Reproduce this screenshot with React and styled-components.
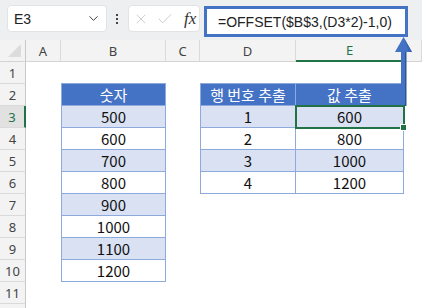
import styled, { createGlobalStyle } from "styled-components";
import { ChevronDown, X, Check } from "lucide-react";

const GlobalStyle = createGlobalStyle`
  body {
    margin: 0;
    background: #fff;
    font-family: "Noto Sans", "Noto Sans CJK KR", sans-serif;
  }
`;

const COLS = "26px 35px 105px 34px 96px 108px 1fr";
const LETTERS = ["A", "B", "C", "D", "E", ""];

const numbers = [500, 600, 700, 800, 900, 1000, 1100, 1200];
const lookup = [
  [1, 600],
  [2, 800],
  [3, 1000],
  [4, 1200],
];

const Page = styled.div`
  position: relative;
  width: 422px;
  height: 308px;
  overflow: hidden;
`;

const Toolbar = styled.div`
  height: 40px;
  box-sizing: border-box;
  background: #eeeff1;
  display: flex;
  align-items: flex-start;
  padding: 5px 0 0 7px;
`;

const NameBox = styled.div`
  width: 100px;
  height: 27px;
  box-sizing: border-box;
  background: #fff;
  border: 1px solid #e2e3e5;
  border-radius: 4px;
  display: flex;
  align-items: center;
  justify-content: space-between;
  padding: 0 5px 0 6px;
  font-family: "Liberation Sans", sans-serif;
  font-size: 14px;
  color: #222;
`;

const Dots = styled.div`
  margin: 9px 0 0 9px;
  display: flex;
  flex-direction: column;
  gap: 2px;
  span {
    width: 2px;
    height: 2px;
    background: #444;
  }
`;

const FxBox = styled.div`
  margin-left: 10px;
  width: 72px;
  height: 27px;
  box-sizing: border-box;
  background: #fff;
  border: 1px solid #e2e3e5;
  border-radius: 4px;
  display: flex;
  align-items: center;
  gap: 7px;
  padding-left: 4px;
  color: #c4c4c4;
`;

const Fx = styled.span`
  margin-left: 3px;
  font-family: "Liberation Serif", serif;
  font-style: italic;
  font-size: 17px;
  color: #333;
`;

const FormulaBox = styled.div`
  margin: 1px 0 0 4px;
  width: 204px;
  height: 31px;
  box-sizing: border-box;
  background: #fff;
  border: 3px solid #4472c4;
  display: flex;
  align-items: center;
  padding-left: 11px;
  font-family: "Liberation Sans", sans-serif;
  font-size: 14px;
  color: #222;
`;

const Grid = styled.div`
  display: flex;
  flex-direction: column;
`;

const Row = styled.div`
  display: grid;
  grid-template-columns: ${COLS};
  height: 22px;
`;

const Corner = styled.div`
  position: relative;
  background: #f3f3f3;
  border-right: 1px solid #c8c8c8;
  border-bottom: 1px solid #d4d4d4;
  &::after {
    content: "";
    position: absolute;
    right: 4px;
    bottom: 4px;
    border-style: solid;
    border-width: 0 0 13px 13px;
    border-color: transparent transparent #dcdcdc transparent;
  }
`;

const ColHead = styled.div`
  background: #f3f3f3;
  border-right: 1px solid #dadada;
  border-bottom: ${(p) => (p.$active ? "2px solid #217346" : "1px solid #d4d4d4")};
  display: flex;
  align-items: center;
  justify-content: center;
  font-size: 13px;
  color: ${(p) => (p.$active ? "#217346" : "#444")};
`;

const RowHead = styled.div`
  background: ${(p) => (p.$active ? "#e1e1e1" : "#f3f3f3")};
  border-bottom: 1px solid #dadada;
  border-right: ${(p) => (p.$active ? "2px solid #217346" : "1px solid #c8c8c8")};
  display: flex;
  align-items: center;
  justify-content: center;
  font-size: 13px;
  color: ${(p) => (p.$active ? "#217346" : "#444")};
`;

const Cell = styled.div`
  background: #fff;
`;

const TCell = styled.div`
  position: relative;
  box-sizing: border-box;
  background: ${(p) =>
    p.$kind === "head" ? "#4472c4" : p.$kind === "alt" ? "#d9e1f2" : "#fff"};
  color: ${(p) => (p.$kind === "head" ? "#fff" : "#111")};
  border-right: 1px solid #8ea9db;
  border-bottom: 1px solid #8ea9db;
  border-left: ${(p) => (p.$left ? "1px solid #8ea9db" : "none")};
  border-top: ${(p) => (p.$top ? "1px solid #8ea9db" : "none")};
  margin-top: ${(p) => (p.$top ? "-1px" : "0")};
  display: flex;
  align-items: center;
  justify-content: center;
  font-family: "Noto Sans CJK KR", "Noto Sans", sans-serif;
  font-size: 15px;
  ${(p) =>
    p.$selected &&
    `
    outline: 2px solid #217346;
    outline-offset: -1px;
    z-index: 1;
    &::after {
      content: "";
      position: absolute;
      right: -4px;
      bottom: -4px;
      width: 5px;
      height: 5px;
      background: #217346;
      border: 1px solid #fff;
    }
  `}
`;

const Arrow = styled.svg`
  position: absolute;
  left: 393px;
  top: 36px;
`;

const kindFor = (r) => (r % 2 === 1 ? "alt" : "plain");

const SheetRow = ({ r, label = r }) => {
  const inB = r >= 2 && r <= 10;
  const inDE = r >= 2 && r <= 6;
  const bKind = r === 2 ? "head" : kindFor(r);
  return (
    <Row>
      <RowHead $active={r === 3}>{label}</RowHead>
      <Cell />
      {inB ? (
        <TCell $kind={bKind} $left $top={r === 2}>
          {r === 2 ? "숫자" : numbers[r - 3]}
        </TCell>
      ) : (
        <Cell />
      )}
      <Cell />
      {inDE ? (
        <>
          <TCell $kind={bKind} $left $top={r === 2}>
            {r === 2 ? "행 번호 추출" : lookup[r - 3][0]}
          </TCell>
          <TCell $kind={bKind} $top={r === 2} $selected={r === 3}>
            {r === 2 ? "값 추출" : lookup[r - 3][1]}
          </TCell>
        </>
      ) : (
        <>
          <Cell />
          <Cell />
        </>
      )}
      <Cell />
    </Row>
  );
};

const App = () => {
  const rows = Array.from({ length: 11 }, (_, i) => i + 1);
  return (
    <Page>
      <GlobalStyle />
      <Toolbar>
        <NameBox>
          <span>E3</span>
          <ChevronDown size={15} color="#444" strokeWidth={1.6} />
        </NameBox>
        <Dots>
          <span />
          <span />
          <span />
        </Dots>
        <FxBox>
          <X size={16} strokeWidth={1.2} />
          <Check size={18} strokeWidth={1.2} />
          <Fx>fx</Fx>
        </FxBox>
        <FormulaBox>=OFFSET($B$3,(D3*2)-1,0)</FormulaBox>
      </Toolbar>
      <Grid>
        <Row>
          <Corner />
          {LETTERS.map((l, i) => (
            <ColHead key={i} $active={l === "E"}>
              {l}
            </ColHead>
          ))}
        </Row>
        {rows.map((r) => (
          <SheetRow key={r} r={r} />
        ))}
        <SheetRow r={12} label="" />
      </Grid>
      <Arrow width="22" height="72" viewBox="0 0 22 72">
        <rect x="8" y="14" width="5" height="56" fill="#4472c4" />
        <rect x="12" y="14" width="1.5" height="56" fill="#2f5597" />
        <polygon points="10.5,1 19,16 2,16" fill="#4472c4" />
        <polygon points="10.5,1 19,16 16,16" fill="#3a65b0" />
      </Arrow>
    </Page>
  );
};

export default App;
